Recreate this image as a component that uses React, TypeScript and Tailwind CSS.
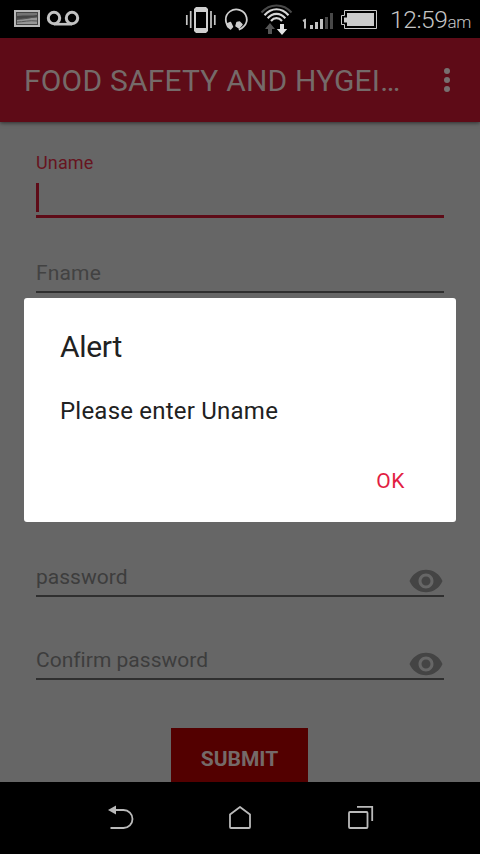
const EyeIcon = () => (
  <svg className="h-9 w-9" viewBox="0 0 24 24" fill="#444444">
    <path d="M12 4.5C7 4.5 2.73 7.61 1 12c1.73 4.39 6 7.5 11 7.5s9.27-3.11 11-7.5c-1.73-4.39-6-7.5-11-7.5zM12 17c-2.76 0-5-2.24-5-5s2.24-5 5-5 5 2.24 5 5-2.24 5-5 5zm0-8c-1.66 0-3 1.34-3 3s1.34 3 3 3 3-1.34 3-3-1.34-3-3-3z" />
  </svg>
);

function StatusBar() {
  return (
    <div className="relative z-10 flex h-[38px] shrink-0 items-center bg-black">
      <svg className="h-[38px] w-[384px] shrink-0" viewBox="0 0 384 38" fill="none">
        {/* picture notification */}
        <rect x="14" y="10" width="26" height="17" fill="#b8b8b8" />
        <rect x="16" y="12" width="22" height="13" fill="#454545" />
        <path d="M17 13h20v2c-5 1-12 0-20 1z" fill="#747474" />
        <path d="M17 20c5-2 12-1 20-3v7H17z" fill="#969696" />
        <path d="M17 19c7 1 13-2 20-2M17 22c6 0 12-2 20-1" stroke="#555" />
        {/* voicemail */}
        <g stroke="#c2c2c2" strokeWidth="3">
          <circle cx="54" cy="18" r="5.7" />
          <circle cx="72" cy="18" r="5.7" />
          <path d="M54 24.2h18" strokeWidth="2.6" />
        </g>
        {/* vibrate */}
        <path fillRule="evenodd" d="M196 7h10l2 2v22l-2 2h-10l-2-2V9zM196 12v16h10V12z" fill="#cfcfcf" />
        <path d="M186.800 15v10M190.700 11v17M211 11v17M214.800 15v10" stroke="#c6c6c6" strokeWidth="1.7" />
        {/* headset */}
        <path d="M230 27.500c-3-2-4.200-4.500-4.200-7.500a10.500 10 0 1 1 18 6.400c-1.300 1.600-2.800 2.600-5 3.200" stroke="#cecece" strokeWidth="1.8" />
        <path d="M227 24l3.500-1.500 2 4.300-2 2.200-2.800-2.300zM237 22.500l2.500-.5 2.500 2.500-3 3.500-3-2z" fill="#cecece" stroke="#cecece" strokeWidth="1.500" strokeLinejoin="round" />
        {/* wifi with transfer arrows */}
        <path d="M261.5 12.5c8-9.5 22-9.5 30 0" stroke="#494949" strokeWidth="2" />
        <path d="M264.5 15.3c7-8 17-8 24 0M267.7 18.2c5-5.8 12.6-5.8 17.6 0M271 21c3.2-3.8 7.8-3.8 11 0" stroke="#d6d6d6" strokeWidth="2.1" />
        <path d="M270 23l5 6h-3v5h-4v-5h-3z" fill="#555" />
        <path d="M280 24h4v5h3.2l-5.2 6-5.2-6h3.2z" fill="#e2e2e2" />
        {/* signal */}
        <path d="M303 21l2-1v8.5" stroke="#bdbdbd" strokeWidth="2" />
        <path d="M310 29h3v-4h-3zM315 29h3v-7h-3zM320 29h3v-10h-3z" fill="#c2c2c2" />
        <path d="M325 29h3V17h-3zM330 29h3V13h-3z" fill="#484848" />
        {/* battery */}
        <path d="M344.5 10.5h32v18h-32v-4h-3v-9h3z" stroke="#c9c9c9" />
        <path d="M347 13h27v13h-27v-3.5h-3v-5h3z" fill="#cbcbcb" />
      </svg>
      <div className="flex items-baseline whitespace-nowrap pl-[6px] pt-[3px] leading-[38px] text-[#c5c5c5]">
        <span className="text-[24.5px] font-light tracking-[-0.4px]">12:59</span>
        <span className="text-[17px] font-light tracking-[-0.5px]">am</span>
      </div>
    </div>
  );
}

function PasswordField({ label }: { label: string }) {
  return (
    <div className="flex h-[83px] shrink-0 items-end justify-between border-b-2 border-[#2f2f2f]">
      <span className="mb-[6px] text-[21px] leading-6 tracking-[0.02px] text-[#3d3d3d]">{label}</span>
      <div className="-mb-1"><EyeIcon /></div>
    </div>
  );
}

export default function App() {
  return (
    <div className="relative flex h-[854px] w-[480px] flex-col overflow-hidden bg-[#666666] font-['Roboto',sans-serif]">
      <StatusBar />
      <header className="z-10 flex h-[84px] shrink-0 items-center justify-between bg-[#5e0b17] pl-6 pr-[30px] shadow-[0_1px_4px_rgba(0,0,0,0.55)]">
        <h1 className="whitespace-nowrap pt-[2px] text-[30px] font-normal leading-9 tracking-[0.19px] text-[#756a69]">FOOD SAFETY AND HYGEI…</h1>
        <div className="flex flex-col gap-[3px]">
          <i className="h-1.5 w-1.5 rounded-full bg-[#777070]" />
          <i className="h-1.5 w-1.5 rounded-full bg-[#777070]" />
          <i className="h-1.5 w-1.5 rounded-full bg-[#777070]" />
        </div>
      </header>

      <main className="flex h-[660px] shrink-0 flex-col overflow-hidden px-9">
        <div className="flex h-24 shrink-0 flex-col border-b-[3px] border-[#5e0b17] pt-[30px]">
          <span className="text-[18px] leading-[21px] tracking-[0.15px] text-[#671420]">Uname</span>
          <span className="mt-[10px] h-[29px] w-[3px] bg-[#5e0b17]" />
        </div>
        <div className="flex h-[75px] shrink-0 items-end border-b-2 border-[#2f2f2f]">
          <span className="mb-[6px] text-[21px] leading-6 tracking-[0.15px] text-[#424242]">Fname</span>
        </div>
        <div className="mt-[221px] flex shrink-0 flex-col">
          <PasswordField label="password" />
          <PasswordField label="Confirm password" />
        </div>
        <button className="ml-[135px] mt-12 h-[61px] w-[137px] shrink-0 bg-[#530000] pt-[2px] text-[21px] font-bold text-[#756a69]">SUBMIT</button>
      </main>

      <nav className="z-10 flex h-[72px] shrink-0 items-center justify-center bg-black">
        <svg className="h-[72px] w-[480px]" viewBox="0 782 480 72" fill="none" stroke="#bababa" strokeWidth="1.8">
          <path d="M114 810h9.5a9 9 0 0 1 0 18H110.5" />
          <path d="M108 810l8-4.5v9z" fill="#bababa" stroke="none" />
          <path d="M240 807l10 7.5V827q0 1-1 1h-18q-1 0-1-1V814.500z" strokeLinejoin="round" />
          <rect x="349" y="812" width="18.500" height="16" rx="1" />
          <path d="M357 806.800h15.200V821" />
        </svg>
      </nav>

      <section role="dialog" className="absolute left-6 top-[298px] z-20 flex h-56 w-[432px] flex-col rounded-[3px] bg-white px-9 text-[#212121]">
        <h2 className="mt-[31px] text-[30px] font-normal leading-9 tracking-[-0.3px]">Alert</h2>
        <p className="mt-[31px] text-[24px] leading-[30px] tracking-[0.22px]">Please enter Uname</p>
        <button className="mr-[15px] mt-[43px] self-end text-[21px] leading-6 tracking-[0.6px] text-[#e21e43]">OK</button>
      </section>
    </div>
  );
}
